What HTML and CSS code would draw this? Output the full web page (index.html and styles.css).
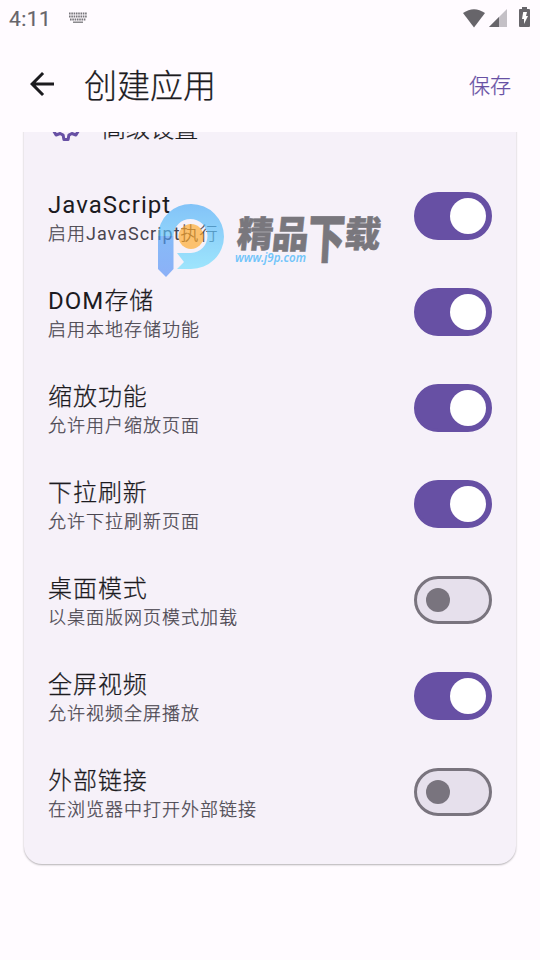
FILE: index.html
```html
<!DOCTYPE html>
<html lang="zh-CN">
<head>
<meta charset="utf-8">
<title>创建应用</title>
<link rel="stylesheet" href="styles.css">
</head>
<body>
<div class="status">
  <span class="clock">4:11</span>
  <svg class="keyboard" width="20" height="12" viewBox="0 0 20 12" stroke="#77757a" fill="none"><path d="M1 1.500h18M1 4.500h18M2 7.500h16" stroke-width="2" stroke-dasharray="1.600 .7"/><path d="M5 10.200h10" stroke-width="1.300"/></svg>
  <svg class="wifi" width="22" height="19" viewBox="0 0 22 19" fill="#67656a"><path d="M0 4Q11-3.600 22 4L11 18.500z"/></svg>
  <svg class="signal" width="18" height="18" viewBox="0 0 18 18"><path d="M18 0v18H0z" fill="#c4c0c6"/><path d="M10 8v10H0z" fill="#67656a"/></svg>
  <svg class="battery" width="11" height="20" viewBox="0 0 11 20"><path d="M3 0h5v2h2q1 0 1 1v16q0 1-1 1H1q-1 0-1-1V3q0-1 1-1h2z" fill="#67656a"/><path d="M4.200 5H8L7 9h2L5 17V12H3z" fill="#fff"/></svg>
</div>
<header class="appbar">
  <svg class="back" width="36" height="36" viewBox="0 0 24 24" fill="#1c1b1f"><path d="M20 11H7.830l5.590-5.590L12 4l-8 8 8 8 1.410-1.410L7.830 13H20z"/></svg>
  <h1>创建应用</h1>
  <span class="save">保存</span>
</header>
<main>
  <section class="card">
    <div class="heading">
      <svg width="36" height="36" viewBox="0 0 24 24" fill="none" stroke="#6750a4" stroke-width="2" stroke-linejoin="round"><path d="M10.600 3h2.800l.5 2.900 2 1.100 2.700-1 1.400 2.400-2.200 1.900v3.400l2.200 1.900-1.400 2.400-2.700-1-2 1.100-.5 2.900h-2.800l-.5-2.900-2-1.100-2.700 1L4 15.600l2.200-1.900v-3.400L4 8.400 5.400 6l2.700 1 2-1.100z"/><circle cx="12" cy="12" r="2.500"/></svg>
      <h2>高级设置</h2>
    </div>
    <div class="row"><div><h3><span class="latin">JavaScript</span></h3><p>启用<span class="latin">JavaScript</span>执行</p></div><i class="switch on"></i></div>
    <div class="row"><div><h3><span class="latin">DOM</span>存储</h3><p>启用本地存储功能</p></div><i class="switch on"></i></div>
    <div class="row"><div><h3>缩放功能</h3><p>允许用户缩放页面</p></div><i class="switch on"></i></div>
    <div class="row"><div><h3>下拉刷新</h3><p>允许下拉刷新页面</p></div><i class="switch on"></i></div>
    <div class="row"><div><h3>桌面模式</h3><p>以桌面版网页模式加载</p></div><i class="switch"></i></div>
    <div class="row"><div><h3>全屏视频</h3><p>允许视频全屏播放</p></div><i class="switch on"></i></div>
    <div class="row"><div><h3>外部链接</h3><p>在浏览器中打开外部链接</p></div><i class="switch"></i></div>
  </section>
</main>
<svg class="watermark" width="228" height="78" viewBox="156 202 228 78">
  <defs>
    <linearGradient id="bowl" x1="0" y1="0" x2="0" y2="1"><stop offset="0" stop-color="#48acf8"/><stop offset="1" stop-color="#70dfff"/></linearGradient>
    <linearGradient id="stem" gradientUnits="userSpaceOnUse" x1="0" y1="222" x2="0" y2="277"><stop offset="0" stop-color="#4ba5f8"/><stop offset="1" stop-color="#5590f7"/></linearGradient>
  </defs>
  <g opacity=".66">
    <path d="M173.500 236H158A33 32.500 0 1 1 191 269H177L184 262 177 253H191A17 17 0 1 0 173.500 236z" fill="url(#bowl)"/>
    <path d="M158 236H173.500V269L166 277 158 269z" fill="url(#stem)"/>
  </g>
  <circle cx="191" cy="236.500" r="12.500" fill="#ffa61f" opacity=".64"/>
  <g class="brand">
    <text transform="translate(236 247) skewX(-6) scale(.95 .95)">精</text>
    <text transform="translate(271 247.500) skewX(-6) scale(.97 1)">品</text>
    <text transform="translate(307 258) skewX(-3) scale(.98 1.4)">下</text>
    <text transform="translate(343.500 247) skewX(-6) scale(.95 .95)">载</text>
  </g>
  <text class="site" x="235" y="262" textLength="71" lengthAdjust="spacingAndGlyphs">www.j9p.com</text>
</svg>
</body>
</html>
```
FILE: styles.css
```css
* { box-sizing: border-box; }
body {
  margin: 0;
  width: 540px;
  height: 960px;
  overflow: hidden;
  position: relative;
  display: flex;
  flex-direction: column;
  background: #fffbff;
  color: #1c1b1f;
  font-family: Roboto, "Noto Sans CJK SC", sans-serif;
  font-weight: 300;
}
h1, h2, h3, p { margin: 0; font-weight: 300; white-space: nowrap; }
h1, h2, h3, p, .save { -webkit-text-stroke: .25px currentColor; }
.latin { font-weight: 400; -webkit-text-stroke: 0; }
h3 .latin { letter-spacing: 1.05px; }
svg { display: block; flex: none; }
.status {
  flex: none;
  height: 36px;
  display: flex;
  align-items: center;
  padding: 0 10px 0 9px;
}
.clock { font-size: 21px; font-weight: 400; -webkit-text-stroke: .2px #67656a; line-height: 36px; color: #67656a; padding-top: 2px; width: 59px; letter-spacing: .4px; }
.wifi { margin-left: auto; }
.signal { margin-left: 4px; }
.battery { margin-left: 12px; margin-right: 0; margin-top: -2px; }
.appbar {
  flex: none;
  height: 96px;
  display: flex;
  align-items: center;
  padding: 0 29px 0 24px;
}
.back { margin-left: -.5px; }
.appbar h1 { margin-left: 24.5px; font-size: 33px; line-height: 42px; padding-top: 5px; }
.save { margin-left: auto; font-size: 21px; line-height: 30px; color: #6750a4; padding-top: 4px; }
main { flex: 1; min-height: 0; overflow: hidden; padding: 0 24px; }
.card {
  margin-top: -48px;
  height: 780px;
  padding: 24px 24px 0;
  border-radius: 18px;
  background: #f6f1f9;
  box-shadow: 0 1px 2px rgba(0, 0, 0, .3);
}
.heading { height: 36px; display: flex; align-items: center; gap: 18px; margin-bottom: 42px; }
h2 { font-size: 24px; letter-spacing: .1px; }
.row { height: 60px; display: flex; align-items: center; justify-content: space-between; margin-bottom: 36px; }
h3 { font-size: 24px; line-height: 34px; letter-spacing: .95px; padding-top: 2px; }
p { font-size: 18px; line-height: 24px; letter-spacing: 1px; color: #49454f; }
.switch {
  width: 78px;
  height: 48px;
  border-radius: 24px;
  border: 3px solid #79747e;
  background: #e6e0ec;
  display: flex;
  align-items: center;
  padding: 0 9px;
}
.switch::before { content: ""; width: 24px; height: 24px; border-radius: 50%; background: #79747e; }
.switch.on { background: #6750a4; border-color: #6750a4; justify-content: flex-end; padding: 0 3px; }
.switch.on::before { width: 36px; height: 36px; background: #fff; }
.watermark { position: absolute; left: 156px; top: 202px; overflow: visible; }
.brand { font: 900 38px "Noto Sans CJK SC", sans-serif; fill: #79777d; stroke: #79777d; stroke-width: .5; }
.site { font: italic 600 12px "Noto Sans", sans-serif; fill: #72c5fa; }
```
